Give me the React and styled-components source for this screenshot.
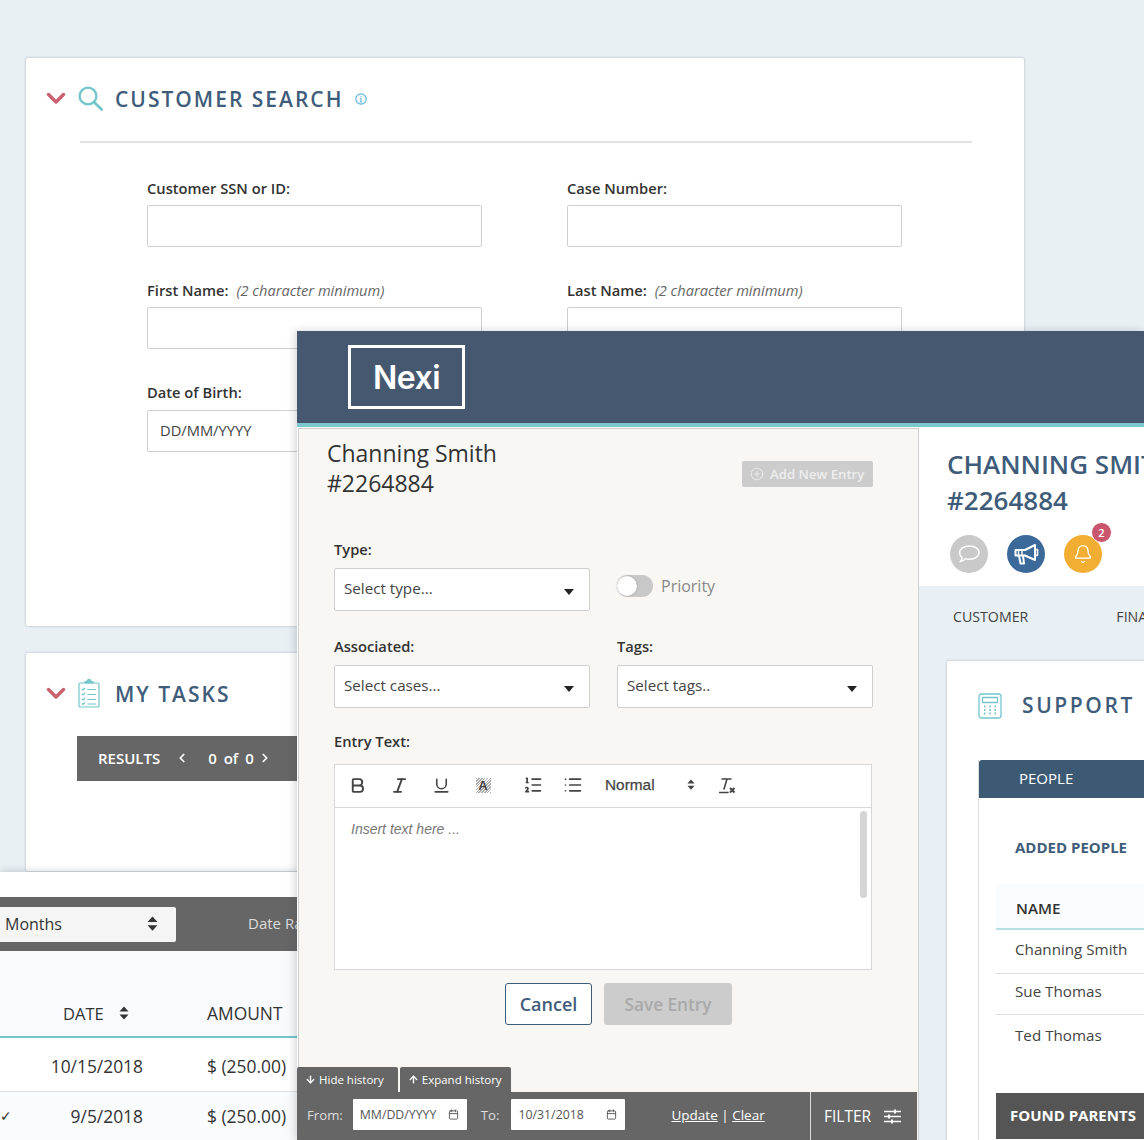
import React from 'react';
import styled, { createGlobalStyle } from 'styled-components';
import { Bold, Italic, Underline, ListOrdered, List, ArrowDown, ArrowUp, ChevronLeft, ChevronRight, Bell, CirclePlus, Calendar } from 'lucide-react';

const Global = createGlobalStyle`
  html, body { margin: 0; padding: 0; background: #e8f0f4; }
  * { box-sizing: border-box; }
  body { font-family: "Open Sans", "Liberation Sans", sans-serif; color: #333; }
`;

// the page is a desktop of overlapping windows, so the windows sit at fixed places
const Stage = styled.div`
  position: relative;
  width: 1144px;
  height: 1140px;
  overflow: hidden;
  background: #e8f0f4;
`;

const Card = styled.section`
  background: #fff;
  border: 1px solid #d6dbe0;
  border-radius: 3px;
  box-shadow: 0 0 2px rgba(90, 110, 130, 0.18);
`;

const SearchCard = styled(Card)`
  position: absolute;
  left: 25px;
  top: 57px;
  width: 1000px;
  height: 570px;
`;

const TasksCard = styled(Card)`
  position: absolute;
  left: 25px;
  top: 652px;
  width: 300px;
  height: 220px;
`;

const CardHead = styled.header`
  display: flex;
  align-items: center;
  height: 83px;
  padding: 0 0 2px 20px;
`;

const ChevronMark = styled.svg`
  width: 20px;
  height: 13px;
  margin-right: 12px;
  flex: none;
`;

const HeadIcon = styled.span`
  display: flex;
  width: 25px;
  margin-right: 12px;
  color: #74c6cb;
`;

const CardTitle = styled.h2`
  margin: ${p => p.$lift ? '-3px' : '0'} 0 0;
  font-size: 21px;
  font-weight: 600;
  line-height: 28px;
  letter-spacing: ${p => p.$spacing || 2}px;
  color: #3f5d7a;
  white-space: nowrap;
`;

const InfoIcon = styled.svg`
  width: 12px;
  height: 12px;
  margin-left: 12px;
  flex: none;
`;

const Rule = styled.hr`
  margin: 0 52px 0 54px;
  border: 0;
  border-top: 2px solid #e0e2e3;
`;

const SearchForm = styled.div`
  display: grid;
  grid-template-columns: 335px 335px;
  column-gap: 85px;
  row-gap: 33px;
  padding: 35px 0 0 121px;
`;

const Field = styled.div`
  display: flex;
  flex-direction: column;
`;

const Label = styled.label`
  display: block;
  font-size: 14.7px;
  line-height: 20px;
  font-weight: 600;
  color: #333;
  margin-bottom: ${p => p.$gap || 7}px;
  white-space: nowrap;
`;

const Hint = styled.em`
  font-weight: 400;
  font-size: 14.6px;
  color: #666;
  margin-left: 4px;
`;

const TextBox = styled.div`
  height: 42px;
  background: #fff;
  border: 1px solid #cfcfcf;
  border-radius: 2px;
  padding: 0 12px;
  font-size: 14.7px;
  line-height: 39px;
  color: #444;
`;

const ResultsBar = styled.div`
  display: flex;
  align-items: center;
  height: 45px;
  margin-left: 51px;
  padding: 0 0 2px 21px;
  background: #666;
  color: #fff;
  font-size: 15px;
  font-weight: 600;
`;

const ResultsCount = styled.span`
  margin: 0 4px 0 19px;
  word-spacing: 3px;
`;

const ResultsLabel = styled.span`
  margin-right: 15px;
`;

const Ledger = styled.section`
  position: absolute;
  left: 0;
  top: 872px;
  width: 300px;
  height: 268px;
  background: #fff;
  padding-top: 25px;
  box-shadow: 0 -2px 6px rgba(60, 70, 80, 0.18);
`;

const LedgerBar = styled.div`
  display: flex;
  align-items: center;
  height: 54px;
  background: #666;
  color: #ddd;
  font-size: 15px;
`;

const PeriodSelect = styled.div`
  flex: none;
  display: flex;
  align-items: center;
  justify-content: space-between;
  width: 176px;
  height: 35px;
  padding: 0 18px 0 5px;
  background: #f5f5f5;
  border-radius: 0 2px 2px 0;
  color: #333;
  font-size: 16px;
`;

const RangeLabel = styled.span`
  margin: -3px 0 0 72px;
  white-space: nowrap;
`;

const LedgerHead = styled.div`
  display: grid;
  grid-template-columns: 143px 1fr;
  column-gap: 64px;
  align-items: center;
  height: 87px;
  padding-top: 39px;
  background: #f8fafd;
  border-bottom: 2px solid #74c6cb;
  font-size: 16.5px;
  color: #333;
`;

const DateHead = styled.span`
  display: flex;
  align-items: center;
  gap: 15px;
  padding-left: 63px;
`;

const AmountHead = styled.span`
  font-size: 17.4px;
  margin-top: -1px;
`;

const LedgerRow = styled.div`
  display: grid;
  grid-template-columns: 143px 1fr;
  column-gap: 64px;
  align-items: center;
  height: ${p => p.$height}px;
  padding: ${p => p.$pad || '0'};
  background: ${p => p.$tint ? '#f9fbfd' : '#fff'};
  border-bottom: ${p => p.$tint ? 0 : '1px solid #ddd'};
  font-size: 17.4px;
  color: #333;
  white-space: nowrap;
`;

const DateCell = styled.span`
  position: relative;
  text-align: right;
`;

const CheckMark = styled.span`
  position: absolute;
  left: 0;
  top: 2px;
  font-size: 14px;
`;

const SortIcon = styled.svg`
  width: ${p => p.$size || 12}px;
  height: ${p => (p.$size || 12) * 1.4}px;
  flex: none;
`;

const Workspace = styled.section`
  position: absolute;
  left: 297px;
  top: 331px;
  width: 847px;
  height: 809px;
  display: flex;
  flex-direction: column;
  background: #fff;
  box-shadow: -2px 0 8px rgba(50, 60, 70, 0.22);
`;

const Masthead = styled.header`
  flex: none;
  display: flex;
  align-items: flex-start;
  height: 96px;
  padding: 14px 0 0 51px;
  background: #465870;
  border-bottom: 4px solid #7cc8cf;
`;

const Logo = styled.div`
  display: flex;
  align-items: center;
  justify-content: center;
  width: 117px;
  height: 64px;
  border: 3px solid #fff;
  color: #fff;
  font-family: Inter, "Open Sans", sans-serif;
  font-size: 32px;
  font-weight: 600;
  letter-spacing: -0.5px;
`;

const Body = styled.div`
  flex: 1;
  min-height: 0;
  display: flex;
  margin-top: 1px;
`;

const EntryPanel = styled.div`
  position: relative;
  flex: none;
  width: 621px;
  margin-left: 1px;
  display: flex;
  flex-direction: column;
  background: #f8f7f3;
  border: 1px solid #cfcfcf;
  border-bottom: 0;
  padding: 9px 0 0;
`;

const EntryTop = styled.div`
  display: flex;
  justify-content: space-between;
  align-items: flex-start;
  padding: 0 45px 0 28px;
`;

const EntryTitle = styled.h1`
  margin: 0;
  font-size: 23px;
  font-weight: 400;
  line-height: 30px;
  color: #333;
`;

const AddButton = styled.div`
  display: flex;
  align-items: center;
  gap: 6px;
  width: 131px;
  height: 26px;
  margin-top: 23px;
  padding-left: 8px;
  background: #ccc;
  border-radius: 2px;
  color: #eee;
  font-size: 13.2px;
  font-weight: 600;
  white-space: nowrap;
`;

const EntryForm = styled.div`
  display: grid;
  grid-template-columns: 256px 256px;
  column-gap: 27px;
  row-gap: 25px;
  padding: 41px 0 0 35px;
`;

const Select = styled.div`
  display: flex;
  align-items: center;
  justify-content: space-between;
  height: 43px;
  padding: 0 15px 0 9px;
  background: #fff;
  border: 1px solid #cfcfcf;
  border-radius: 2px;
  font-size: 15.2px;
  color: #444;
`;

const SelectText = styled.span`
  margin-top: -3px;
`;

const Caret = styled.span`
  width: 0;
  height: 0;
  margin-top: 5px;
  border-left: 5px solid transparent;
  border-right: 5px solid transparent;
  border-top: 6px solid #222;
`;

const PriorityRow = styled.div`
  display: flex;
  align-items: flex-start;
  gap: 8px;
  padding-top: 36px;
`;

const Toggle = styled.span`
  position: relative;
  width: 36px;
  height: 22px;
  border-radius: 11px;
  background: #c8c8c8;
`;

const Knob = styled.span`
  position: absolute;
  left: 0;
  top: 1px;
  width: 20px;
  height: 20px;
  border-radius: 50%;
  background: #fff;
  box-shadow: 0 0 2px rgba(0, 0, 0, 0.3);
`;

const PriorityText = styled.span`
  font-size: 16px;
  line-height: 22px;
  color: #888;
`;

const EntrySection = styled.div`
  padding: 23px 0 0 35px;
`;

const Editor = styled.div`
  width: 538px;
  height: 206px;
  display: flex;
  flex-direction: column;
  background: #fff;
  border: 1px solid #d8d8d8;
`;

const Toolbar = styled.div`
  flex: none;
  display: flex;
  align-items: center;
  height: 43px;
  padding: 0 0 2px 1px;
  border-bottom: 1px solid #d8d8d8;
  color: #444;
`;

const ToolButton = styled.span`
  display: flex;
  align-items: center;
  justify-content: center;
  flex: none;
  width: ${p => p.$width || 42}px;
  margin-right: ${p => p.$after || 0}px;
`;

const HighlightA = styled.span`
  display: flex;
  align-items: center;
  justify-content: center;
  width: 15px;
  height: 15px;
  background: repeating-linear-gradient(135deg, #aaa 0 1px, #fff 1px 2px);
  font-family: "Liberation Sans", sans-serif;
  font-size: 13px;
  font-weight: 700;
  color: #444;
`;

const Picker = styled.span`
  display: flex;
  align-items: center;
  justify-content: space-between;
  flex: none;
  width: 90px;
  margin-right: 23px;
  font-family: "Liberation Sans", sans-serif;
  font-size: 15.4px;
  color: #444;
  -webkit-text-stroke: 0.25px #444;
`;

const EditorBody = styled.div`
  position: relative;
  flex: 1;
  padding: 13px 16px;
  font-family: "Liberation Sans", sans-serif;
  font-size: 14px;
  font-style: italic;
  color: #777;
`;

const Scrollbar = styled.span`
  position: absolute;
  right: 4px;
  top: 3px;
  width: 7px;
  height: 87px;
  border-radius: 4px;
  background: #d5d5d5;
`;

const EntryActions = styled.div`
  display: flex;
  gap: 12px;
  padding: 13px 0 0 206px;
`;

const CancelButton = styled.div`
  display: flex;
  align-items: center;
  justify-content: center;
  width: 87px;
  height: 42px;
  background: #fff;
  border: 1.5px solid #3f5d7a;
  border-radius: 3px;
  color: #3f5d7a;
  font-size: 18px;
  font-weight: 600;
`;

const SaveButton = styled(CancelButton)`
  width: 128px;
  background: #ccc;
  border: 0;
  color: #a9a9a9;
  font-size: 17.2px;
`;

const HistoryDock = styled.div`
  margin: auto 0 0 -2px;
  display: flex;
  flex-direction: column;
  width: 620px;
`;

const HistoryTabs = styled.div`
  display: flex;
  gap: 2px;
  height: 25px;
`;

const HistoryTab = styled.div`
  display: flex;
  align-items: center;
  gap: 3px;
  padding: 0 ${p => p.$right}px 0 8px;
  background: #666;
  color: #fff;
  font-size: 11.5px;
  font-weight: 500;
  border-radius: 2px 2px 0 0;
  white-space: nowrap;
`;

const FilterBar = styled.div`
  display: flex;
  align-items: center;
  height: 48px;
  padding-bottom: 3px;
  background: #666;
  color: #ddd;
  font-size: 13.2px;
`;

const FilterLabel = styled.span`
  margin: 0 ${p => p.$after}px 0 ${p => p.$before}px;
`;

const DateBox = styled.div`
  flex: none;
  display: flex;
  align-items: center;
  justify-content: space-between;
  width: 114px;
  height: 31px;
  padding: 0 8px 0 7px;
  background: #fff;
  border-radius: 1px;
  color: #555;
  font-size: 12.3px;
  white-space: nowrap;
`;

const FilterLinks = styled.span`
  margin-left: 46px;
  color: #fff;
  white-space: nowrap;
  font-size: 13.5px;
`;

const FilterLink = styled.span`
  text-decoration: underline;
`;

const FilterButton = styled.div`
  display: flex;
  align-items: center;
  gap: 13px;
  align-self: stretch;
  margin: 0 0 -3px auto;
  width: 107px;
  padding-left: 13px;
  border-left: 1px solid #ddd;
  color: #fff;
  font-size: 15.5px;
`;

const ProfilePane = styled.div`
  flex: 1;
  min-width: 0;
  display: flex;
  flex-direction: column;
  overflow: hidden;
  background: #e8f0f5;
`;

const ProfileTop = styled.div`
  flex: none;
  height: 158px;
  padding: 18px 0 0 28px;
  background: #fff;
`;

const ProfileName = styled.h2`
  margin: 0;
  font-size: 26px;
  line-height: 36px;
  font-weight: 600;
  color: #3f5d7a;
  white-space: nowrap;
`;

const BadgeRow = styled.div`
  display: flex;
  gap: 19px;
  margin: 17px 0 0 3px;
`;

const RoundIcon = styled.span`
  position: relative;
  display: flex;
  align-items: center;
  justify-content: center;
  width: 38px;
  height: 38px;
  border-radius: 50%;
  background: ${p => p.$color};
  color: #fff;
`;

const CountBadge = styled.span`
  position: absolute;
  top: -13px;
  right: -10px;
  width: 21px;
  height: 21px;
  border-radius: 50%;
  border: 1px solid #fff;
  background: #c9566c;
  color: #fff;
  font-size: 11px;
  font-weight: 600;
  line-height: 19px;
  text-align: center;
`;

const ProfileTabs = styled.div`
  flex: none;
  display: flex;
  height: 74px;
  padding: 21px 0 0 34px;
  gap: 88px;
  font-size: 14.2px;
  line-height: 20px;
  color: #444;
  white-space: nowrap;
`;

const SupportCard = styled(Card)`
  flex: 1;
  margin-left: 27px;
  width: 260px;
  border-radius: 3px 0 0 0;
`;

const SupportHead = styled.div`
  display: flex;
  align-items: center;
  gap: 20px;
  height: 99px;
  padding: 0 0 9px 31px;
  color: #74c6cb;
`;

const PeoplePanel = styled.div`
  margin-left: 31px;
  width: 240px;
  height: 400px;
  border-left: 1px solid #ddd;
`;

const PeopleHead = styled.div`
  height: 38px;
  padding-left: 40px;
  background: #3d5a75;
  border-radius: 3px 0 0 0;
  color: #fff;
  font-size: 15px;
  font-weight: 500;
  line-height: 37px;
`;

const PeopleTitle = styled.h3`
  margin: 0;
  padding: 39px 0 0 36px;
  font-size: 15px;
  line-height: 20px;
  font-weight: 700;
  color: #3f5d7a;
`;

const PeopleTable = styled.div`
  margin: 27px 0 0 17px;
`;

const PeopleTh = styled.div`
  height: 46px;
  padding: 14px 0 0 20px;
  background: #fafcfd;
  border-bottom: 2px solid #b5dfe5;
  font-size: 15.2px;
  font-weight: 600;
  line-height: 20px;
  color: #333;
`;

const PeopleRow = styled.div`
  height: ${p => p.$height}px;
  padding: ${p => p.$top}px 0 0 19px;
  border-bottom: ${p => p.$last ? 0 : '1px solid #ddd'};
  font-size: 15.2px;
  line-height: 20px;
  color: #444;
  white-space: nowrap;
`;

const FoundBar = styled.div`
  height: 46px;
  margin: 38px 0 0 17px;
  padding-left: 14px;
  background: #555;
  color: #fff;
  font-size: 15px;
  font-weight: 700;
  line-height: 44px;
  white-space: nowrap;
`;

const Chevron = () => (
  <ChevronMark viewBox="0 0 20 13">
    <path d="M2.5 2.5 L10 10 L17.5 2.5" fill="none" stroke="#c9606f" strokeWidth="3.4" strokeLinecap="round" strokeLinejoin="round" />
  </ChevronMark>
);

const SearchGlass = () => (
  <svg width="25" height="25" viewBox="0 0 25 25" fill="none" stroke="#74c6cb" strokeWidth="2.4" strokeLinecap="round">
    <circle cx="10" cy="10" r="8.4" />
    <path d="M16.2 16.2 L23.6 23.6" strokeWidth="2.8" />
  </svg>
);

const Info = () => (
  <InfoIcon viewBox="0 0 12 12" fill="none" stroke="#5fb6e0">
    <circle cx="6" cy="6" r="5.2" strokeWidth="1.2" />
    <path d="M6 5.2 V9 M4.8 9 H7.2 M4.9 5.2 H6" strokeWidth="1.1" />
    <circle cx="6" cy="3.3" r="0.6" fill="#5fb6e0" stroke="none" />
  </InfoIcon>
);

const Sort = ({ size, color = '#333' }) => (
  <SortIcon $size={size} viewBox="0 0 10 14" fill={color}>
    <path d="M5 0.5 L9.5 5.5 H0.5 Z M5 13.5 L0.5 8.5 H9.5 Z" />
  </SortIcon>
);

const ClipboardIcon = () => (
  <svg width="22" height="29" viewBox="0 0 22 29" fill="none" stroke="#74c6cb" strokeWidth="1.2">
    <rect x="1" y="4" width="20" height="24" rx="1" />
    <path d="M7 4 V2.5 H9 A2 2 0 0 1 13 2.5 H15 V4 Z" fill="#74c6cb" />
    <path d="M4 10 l1 1 l2 -2 M4 15 l1 1 l2 -2 M4 20 l1 1 l2 -2 M4 24.5 l1 1 l2 -2 M9.5 10.5 H18 M9.5 15.5 H18 M9.5 20.5 H18 M9.5 25 H18" />
  </svg>
);

const CalculatorIcon = () => (
  <svg width="24" height="26" viewBox="0 0 24 26" fill="none" stroke="#74c6cb" strokeWidth="1.3" style={{ flex: 'none' }}>
    <rect x="1" y="1" width="22" height="24" rx="2.5" />
    <rect x="4.5" y="4.5" width="15" height="5" rx="0.5" />
    <path d="M6 13.5 H7.5 M11.2 13.5 H12.8 M16.5 13.5 H18 M6 17 H7.5 M11.2 17 H12.8 M16.5 17 H18 M6 20.5 H7.5 M11.2 20.5 H12.8 M16.5 20.5 H18" strokeWidth="1.8" />
  </svg>
);

const BubbleIcon = () => (
  <svg width="24" height="22" viewBox="0 0 24 22" fill="none" stroke="#fff" strokeWidth="1.5" strokeLinejoin="round">
    <path d="M12.5 3 C18 3 22 5.8 22 9.6 C22 13.4 18 16.2 12.5 16.2 C11 16.2 9.6 16 8.4 15.6 C7.2 17.2 5.4 18.4 3.2 18.6 C4.4 17.4 5 16 5 14.4 C3.2 13.2 2.6 11.4 2.6 9.6 C2.6 5.8 7 3 12.5 3 Z" />
  </svg>
);

const MegaphoneIcon = () => (
  <svg width="25" height="23" viewBox="0 0 25 23" fill="none" stroke="#fff" strokeWidth="2" strokeLinejoin="round">
    <path d="M1.5 7 H11 L21 2 V17 L11 12.5 H1.5 Z" />
    <path d="M21 6.5 H23.5 V12.5 H21" strokeWidth="1.6" />
    <path d="M4.5 7 V12.5 M8 7 V12.5" strokeWidth="1.4" />
    <path d="M5 12.5 L6.5 20.5 H10 L9 12.5" />
  </svg>
);

const FilterSliders = () => (
  <svg width="17" height="15" viewBox="0 0 17 15" fill="none" stroke="#fff" strokeWidth="1.5">
    <path d="M0 2.5 H17 M0 7.5 H17 M0 12.5 H17" />
    <path d="M11 0.5 V4.5 M5 5.5 V9.5 M8 10.5 V14.5" strokeWidth="2" />
  </svg>
);

const ClearFormat = () => (
  <svg width="17" height="18" viewBox="0 0 17 18" fill="none" stroke="#444">
    <path d="M3 3 H12 M8 3 L5 13 M0.5 16.5 H9" strokeWidth="1.6" strokeLinecap="round" />
    <path d="M11 12 L15.5 16.5 M15.5 12 L11 16.5" strokeWidth="2" />
  </svg>
);

const SelectField = ({ children }) => (
  <Select>
    <SelectText>{children}</SelectText>
    <Caret />
  </Select>
);

export default function App() {
  return (
    <Stage>
      <Global />

      <SearchCard>
        <CardHead>
          <Chevron />
          <HeadIcon><SearchGlass /></HeadIcon>
          <CardTitle>CUSTOMER SEARCH</CardTitle>
          <Info />
        </CardHead>
        <Rule />
        <SearchForm>
          <Field>
            <Label>Customer SSN or ID:</Label>
            <TextBox />
          </Field>
          <Field>
            <Label>Case Number:</Label>
            <TextBox />
          </Field>
          <Field>
            <Label>First Name: <Hint>(2 character minimum)</Hint></Label>
            <TextBox />
          </Field>
          <Field>
            <Label>Last Name: <Hint>(2 character minimum)</Hint></Label>
            <TextBox />
          </Field>
          <Field>
            <Label $gap={8}>Date of Birth:</Label>
            <TextBox>DD/MM/YYYY</TextBox>
          </Field>
        </SearchForm>
      </SearchCard>

      <TasksCard>
        <CardHead>
          <Chevron />
          <HeadIcon><ClipboardIcon /></HeadIcon>
          <CardTitle>MY TASKS</CardTitle>
        </CardHead>
        <ResultsBar>
          <ResultsLabel>RESULTS</ResultsLabel>
          <ChevronLeft size={14} strokeWidth={3} />
          <ResultsCount>0 of 0</ResultsCount>
          <ChevronRight size={14} strokeWidth={3} />
        </ResultsBar>
      </TasksCard>

      <Ledger>
        <LedgerBar>
          <PeriodSelect>
            <span>Months</span>
            <Sort size={11} />
          </PeriodSelect>
          <RangeLabel>Date Range</RangeLabel>
        </LedgerBar>
        <LedgerHead>
          <DateHead>DATE <Sort size={10} /></DateHead>
          <AmountHead>AMOUNT</AmountHead>
        </LedgerHead>
        <LedgerRow $height={54} $pad="3px 0 0">
          <DateCell>10/15/2018</DateCell>
          <span>$ (250.00)</span>
        </LedgerRow>
        <LedgerRow $height={50} $pad="0 0 3px" $tint>
          <DateCell><CheckMark>✓</CheckMark>9/5/2018</DateCell>
          <span>$ (250.00)</span>
        </LedgerRow>
      </Ledger>

      <Workspace>
        <Masthead>
          <Logo>Nexi</Logo>
        </Masthead>
        <Body>
          <EntryPanel>
            <EntryTop>
              <EntryTitle>Channing Smith<br />#2264884</EntryTitle>
              <AddButton><CirclePlus size={14} strokeWidth={1.5} /> Add New Entry</AddButton>
            </EntryTop>
            <EntryForm>
              <Field>
                <Label $gap={9}>Type:</Label>
                <SelectField>Select type...</SelectField>
              </Field>
              <PriorityRow>
                <Toggle><Knob /></Toggle>
                <PriorityText>Priority</PriorityText>
              </PriorityRow>
              <Field>
                <Label $gap={9}>Associated:</Label>
                <SelectField>Select cases...</SelectField>
              </Field>
              <Field>
                <Label $gap={9}>Tags:</Label>
                <SelectField>Select tags..</SelectField>
              </Field>
            </EntryForm>
            <EntrySection>
              <Label $gap={13}>Entry Text:</Label>
              <Editor>
                <Toolbar>
                  <ToolButton><Bold size={19} strokeWidth={2.4} /></ToolButton>
                  <ToolButton><Italic size={19} strokeWidth={2.4} /></ToolButton>
                  <ToolButton><Underline size={19} strokeWidth={2} /></ToolButton>
                  <ToolButton $after={8}><HighlightA>A</HighlightA></ToolButton>
                  <ToolButton><ListOrdered size={20} strokeWidth={2} /></ToolButton>
                  <ToolButton $width={38} $after={13}><List size={20} strokeWidth={2} /></ToolButton>
                  <Picker>Normal <Sort size={8} color="#444" /></Picker>
                  <ToolButton $width={18}><ClearFormat /></ToolButton>
                </Toolbar>
                <EditorBody>
                  Insert text here ...
                  <Scrollbar />
                </EditorBody>
              </Editor>
            </EntrySection>
            <EntryActions>
              <CancelButton>Cancel</CancelButton>
              <SaveButton>Save Entry</SaveButton>
            </EntryActions>
            <HistoryDock>
              <HistoryTabs>
                <HistoryTab $right={14}><ArrowDown size={11} strokeWidth={3} /> Hide history</HistoryTab>
                <HistoryTab $right={9}><ArrowUp size={11} strokeWidth={3} /> Expand history</HistoryTab>
              </HistoryTabs>
              <FilterBar>
                <FilterLabel $before={10} $after={10}>From:</FilterLabel>
                <DateBox>MM/DD/YYYY <Calendar size={11} /></DateBox>
                <FilterLabel $before={14} $after={12}>To:</FilterLabel>
                <DateBox>10/31/2018 <Calendar size={11} /></DateBox>
                <FilterLinks><FilterLink>Update</FilterLink> | <FilterLink>Clear</FilterLink></FilterLinks>
                <FilterButton>FILTER <FilterSliders /></FilterButton>
              </FilterBar>
            </HistoryDock>
          </EntryPanel>

          <ProfilePane>
            <ProfileTop>
              <ProfileName>CHANNING SMITH<br />#2264884</ProfileName>
              <BadgeRow>
                <RoundIcon $color="#c9c9c9"><BubbleIcon /></RoundIcon>
                <RoundIcon $color="#3b6a9a"><MegaphoneIcon /></RoundIcon>
                <RoundIcon $color="#f2ad33">
                  <Bell size={20} strokeWidth={1.6} />
                  <CountBadge>2</CountBadge>
                </RoundIcon>
              </BadgeRow>
            </ProfileTop>
            <ProfileTabs>
              <span>CUSTOMER</span>
              <span>FINANCIAL</span>
            </ProfileTabs>
            <SupportCard>
              <SupportHead>
                <CalculatorIcon />
                <CardTitle $spacing={2.6} $lift>SUPPORT</CardTitle>
              </SupportHead>
              <PeoplePanel>
                <PeopleHead>PEOPLE</PeopleHead>
                <PeopleTitle>ADDED PEOPLE</PeopleTitle>
                <PeopleTable>
                  <PeopleTh>NAME</PeopleTh>
                  <PeopleRow $height={44} $top={9}>Channing Smith</PeopleRow>
                  <PeopleRow $height={41} $top={7}>Sue Thomas</PeopleRow>
                  <PeopleRow $height={40} $top={10} $last>Ted Thomas</PeopleRow>
                </PeopleTable>
                <FoundBar>FOUND PARENTS</FoundBar>
              </PeoplePanel>
            </SupportCard>
          </ProfilePane>
        </Body>
      </Workspace>
    </Stage>
  );
}
